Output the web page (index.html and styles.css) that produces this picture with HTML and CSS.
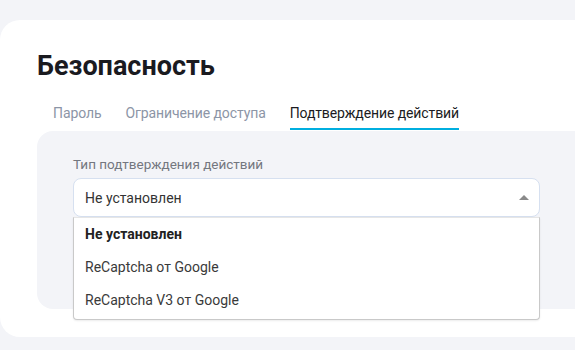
FILE: index.html
```html
<!DOCTYPE html>
<html lang="ru">
<head>
  <meta charset="UTF-8" />
  <title>Безопасность</title>
  <link rel="stylesheet" href="styles.css">
</head>
<body>

  <div class="card">
    <h1>Безопасность</h1>

    <div class="tabs">
      <div class="tab">Пароль</div>
      <div class="tab">Ограничение доступа</div>
      <div class="tab active">Подтверждение действий</div>
    </div>

    <div class="panel">
      <label class="field-label">Тип подтверждения действий</label>
      <div class="select open">
        <span class="select-value">Не установлен</span>
        <span class="arrow"></span>
        <ul class="options">
          <li class="selected">Не установлен</li>
          <li>ReCaptcha от Google</li>
          <li>ReCaptcha V3 от Google</li>
        </ul>
      </div>
    </div>
  </div>

</body>
</html>
```

FILE: styles.css
```css
:root {
  --page-bg: #f3f4f8;
  --text: #1b1b22;
  --muted: #8c95a6;
  --label: #73777f;
  --accent: #00aedf;
  --field-border: #d6e0f0;
}

body {
  margin: 0;
  padding: 20px 0 0;
  background-color: var(--page-bg);
  font-family: Roboto, "Liberation Sans", sans-serif;
  color: var(--text);
}

.card {
  background-color: #fff;
  border-radius: 20px 0 0 20px;
  padding: 30px 0 28px 37px;
}

h1 {
  margin: 0;
  font-size: 27px;
  line-height: 32px;
  font-weight: 700;
  color: #1a1a1f;
}

.tabs {
  display: flex;
  gap: 24px;
  margin: 21px 0 1px 16px;
}

.tab {
  font-size: 14px;
  line-height: 20px;
  letter-spacing: -0.1px;
  color: var(--muted);
  padding-bottom: 5px;
  border-bottom: 2px solid transparent;
}

.tab.active {
  color: var(--text);
  border-bottom-color: var(--accent);
}

.panel {
  background-color: var(--page-bg);
  border-radius: 16px 0 0 16px;
  height: 178px;
  box-sizing: border-box;
  padding: 24px 0 0 36px;
}

.field-label {
  display: block;
  font-size: 13.5px;
  line-height: 18px;
  color: var(--label);
  margin-bottom: 5px;
}

.select {
  position: relative;
  width: 467px;
  height: 39px;
  box-sizing: border-box;
  background-color: #fff;
  border: 1px solid var(--field-border);
  border-radius: 8px;
  display: flex;
  align-items: center;
  padding-left: 11px;
}

.select-value {
  font-size: 14px;
  color: #333;
}

.arrow {
  position: absolute;
  right: 10px;
  top: 16px;
  width: 0;
  height: 0;
  border-left: 5px solid transparent;
  border-right: 5px solid transparent;
  border-bottom: 5px solid #8a8a8a;
}

.options {
  position: absolute;
  top: 38px;
  left: -1px;
  width: 467px;
  box-sizing: border-box;
  margin: 0;
  padding: 0 0 2px;
  list-style: none;
  background-color: #fff;
  border: 1px solid #c9c9c9;
  border-top-color: #e6e6e6;
  border-radius: 0 0 4px 4px;
  box-shadow: 0 1px 2px rgba(0, 0, 0, 0.08);
}

.options li {
  height: 33px;
  line-height: 33px;
  padding-left: 11px;
  font-size: 14px;
  color: #3a3a3a;
}

.options li.selected {
  font-weight: 700;
  color: #222;
}
```
